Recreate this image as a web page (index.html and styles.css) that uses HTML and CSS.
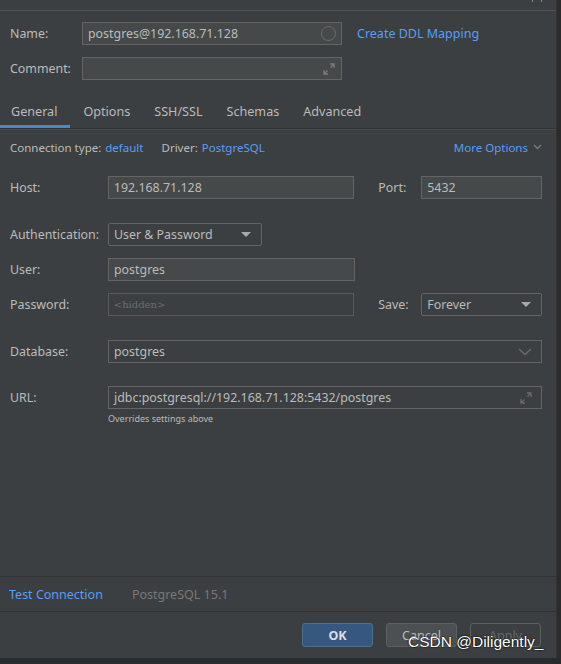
FILE: index.html
```
<!DOCTYPE html>
<html>
<head>
<title>Data source</title>
<link rel="stylesheet" href="styles.css">
</head>
<body>
	<div class="dialog">
		<!-- title bar remains -->
		<div class="titleBar"><span class="closeMark"></span></div>

		<!-- name + comment -->
		<div class="head">
			<div class="headRow">
				<span class="label nameLabel">Name:</span>
				<div class="field headField">
					<span>postgres@192.168.71.128</span>
					<span class="circleIcon"></span>
				</div>
				<span class="link ddl">Create DDL Mapping</span>
			</div>
			<div class="headRow">
				<span class="label nameLabel">Comment:</span>
				<div class="field headField">
					<span></span>
					<svg class="expandIcon" width="12" height="12" viewBox="0 0 12 12"><path d="M7 1h4v4M11 1L7.5 4.5M5 11H1V7M1 11l3.5-3.5" fill="none" stroke="#7b7b7b" stroke-width="1.3"/></svg>
				</div>
			</div>
		</div>

		<!-- tabs -->
		<div class="tabs">
			<span class="tab active">General</span>
			<span class="tab">Options</span>
			<span class="tab">SSH/SSL</span>
			<span class="tab">Schemas</span>
			<span class="tab">Advanced</span>
		</div>

		<div class="connRow">
			<span class="label">Connection type:</span>
			<span class="link connVal">default</span>
			<span class="label">Driver:</span>
			<span class="link driverVal">PostgreSQL</span>
			<span class="link moreOptions">More Options
				<svg width="9" height="6" viewBox="0 0 9 6"><path d="M1 1l3.5 3.5L8 1" fill="none" stroke="#7b7b7b" stroke-width="1.3"/></svg>
			</span>
		</div>

		<!-- form -->
		<div class="form">
			<div class="row">
				<span class="label formLabel">Host:</span>
				<div class="field short"><span>192.168.71.128</span></div>
				<span class="label sideLabel">Port:</span>
				<div class="field side"><span>5432</span></div>
			</div>
			<div class="row authRow">
				<span class="label formLabel">Authentication:</span>
				<div class="field select auth"><span>User &amp; Password</span><span class="triangle"></span></div>
			</div>
			<div class="row userRow">
				<span class="label formLabel">User:</span>
				<div class="field short"><span>postgres</span></div>
			</div>
			<div class="row passRow">
				<span class="label formLabel">Password:</span>
				<div class="field short disabled"><span class="hidden">&lt;hidden&gt;</span></div>
				<span class="label sideLabel">Save:</span>
				<div class="field side select"><span>Forever</span><span class="triangle"></span></div>
			</div>
			<div class="row dbRow">
				<span class="label formLabel">Database:</span>
				<div class="field wide plain">
					<span>postgres</span>
					<svg width="14" height="8" viewBox="0 0 14 8"><path d="M1 1l6 5.5L13 1" fill="none" stroke="#6a6a6a" stroke-width="1.4"/></svg>
				</div>
			</div>
			<div class="row urlRow">
				<span class="label formLabel">URL:</span>
				<div class="field wide plain">
					<span>jdbc:postgresql://192.168.71.128:5432/postgres</span>
					<svg class="expandIcon" width="12" height="12" viewBox="0 0 12 12"><path d="M7 1h4v4M11 1L7.5 4.5M5 11H1V7M1 11l3.5-3.5" fill="none" stroke="#6a6a6a" stroke-width="1.3"/></svg>
				</div>
			</div>
			<div class="hint">Overrides settings above</div>
		</div>

		<!-- status bar -->
		<div class="testBar">
			<span class="link">Test Connection</span>
			<span class="version">PostgreSQL 15.1</span>
		</div>

		<!-- buttons -->
		<div class="buttons">
			<button class="btn primary">OK</button>
			<button class="btn">Cancel</button>
			<button class="btn off">Apply</button>
		</div>
		<div class="watermark">CSDN @Diligently_</div>
	</div>
</body>
</html>
```

FILE: styles.css
```
body {
	margin: 0;
	background-color: #2b2b2b;
	font-family: "Noto Sans", "Open Sans", sans-serif;
	font-size: 12.4px;
	color: #bbbbbb;
}

.dialog {
	position: relative;
	width: 556px;
	height: 658px;
	background-color: #3c3f41;
	border-right: 1px solid #323232;
	display: flex;
	flex-direction: column;
}

.titleBar {
	height: 10px;
	border-bottom: 1px solid #515151;
	position: relative;
}
.closeMark {
	position: absolute;
	right: 14px;
	top: 0;
	width: 8px;
	height: 2px;
	border-left: 1px solid #8a8a8a;
	border-right: 1px solid #8a8a8a;
}

.label {
	white-space: nowrap;
}
.link {
	color: #589df6;
	white-space: nowrap;
}

.head {
	padding: 11px 0 0 10px;
}
.headRow {
	display: flex;
	align-items: center;
	height: 23px;
	margin-bottom: 12px;
}
.nameLabel {
	width: 72px;
}
.ddl {
	margin-left: 15px;
	font-size: 12.5px;
}

.field {
	box-sizing: border-box;
	height: 23px;
	background-color: #45494a;
	border: 1px solid #646464;
	display: flex;
	align-items: center;
	justify-content: space-between;
	padding: 0 5px;
	font-size: 12.4px;
	color: #bbbbbb;
}
.headField {
	width: 260px;
}
.circleIcon {
	box-sizing: border-box;
	width: 15px;
	height: 15px;
	border: 1.5px solid #6c6c6c;
	border-radius: 50%;
}
.expandIcon {
	margin-right: 1px;
}

.tabs {
	display: flex;
	height: 40px;
	margin-top: -4px;
	border-bottom: 1px solid #323232;
	box-shadow: 0 1px 0 #4a4a4a;
	font-size: 12.6px;
}
.tab {
	display: flex;
	align-items: center;
	padding: 10px 11px 0 11px;
	margin-right: 2px;
	box-sizing: border-box;
	border-bottom: 3px solid transparent;
}
.tab.active {
	border-bottom-color: #4a88c7;
	padding-right: 13px;
}

.connRow {
	display: flex;
	align-items: center;
	height: 20px;
	margin-top: 8px;
	padding-left: 10px;
	padding-right: 14px;
	font-size: 11.5px;
}
.connVal {
	margin-left: 4px;
	margin-right: 18px;
}
.driverVal {
	margin-left: 4px;
}
.moreOptions {
	margin-left: auto;
	display: flex;
	align-items: center;
	gap: 5px;
}

.form {
	flex: 1;
	padding: 19px 14px 0 10px;
}
.row {
	display: flex;
	align-items: center;
	height: 23px;
}
.formLabel {
	width: 98px;
}
.sideLabel {
	width: 43px;
	margin-left: 24px;
}
.short {
	width: 247px;
}
.side {
	width: 121px;
}
.wide {
	flex: 1;
}
.auth {
	width: 154px;
}
.select {
	border-radius: 2px;
	background-color: #3c3f41;
}
.triangle {
	width: 0;
	height: 0;
	border-left: 5px solid transparent;
	border-right: 5px solid transparent;
	border-top: 5px solid #a9a9a9;
	margin-right: 5px;
}
.plain {
	background-color: #3c3f41;
}
.plain svg {
	margin-right: 4px;
}
.authRow {
	margin-top: 24px;
}
.userRow {
	margin-top: 12px;
}
.passRow {
	margin-top: 12px;
}
.disabled span.hidden {
	font-family: "DejaVu Serif", "Liberation Serif", serif;
	font-size: 10px;
	color: #6c6c6c;
}
.disabled {
	background-color: #3c3f41;
	border-color: #5a5a5a;
}
.dbRow {
	margin-top: 24px;
}
.urlRow {
	margin-top: 23px;
}
.hint {
	margin-left: 98px;
	margin-top: 3px;
	font-size: 9px;
	color: #bbbbbb;
}

.testBar {
	display: flex;
	align-items: center;
	height: 34px;
	border-top: 1px solid #323232;
	border-bottom: 1px solid #323232;
	padding-left: 9px;
	font-size: 12.5px;
	margin-bottom: 11px;
}
.version {
	margin-left: 29px;
	color: #787878;
}

.buttons {
	display: flex;
	justify-content: flex-end;
	gap: 13px;
	padding-right: 15px;
	height: 35px;
}
.btn {
	width: 71px;
	height: 24px;
	background-color: #4c5052;
	border: 1px solid #5e6060;
	border-radius: 3px;
	color: #bbbbbb;
	font-family: "Noto Sans", sans-serif;
	font-size: 12.5px;
}
.btn.primary {
	background-color: #365880;
	border-color: #4c708c;
	color: #dddddd;
	font-weight: bold;
}
.btn.off {
	background-color: #3c3f41;
	border-color: #5e6060;
	color: #666666;
}

.watermark {
	position: absolute;
	left: 408px;
	top: 633px;
	font-family: "Liberation Sans", sans-serif;
	font-size: 15.5px;
	color: #ffffff;
	text-shadow: 0 0 2px #000000, 0 0 1px #000000;
	white-space: nowrap;
}
```
